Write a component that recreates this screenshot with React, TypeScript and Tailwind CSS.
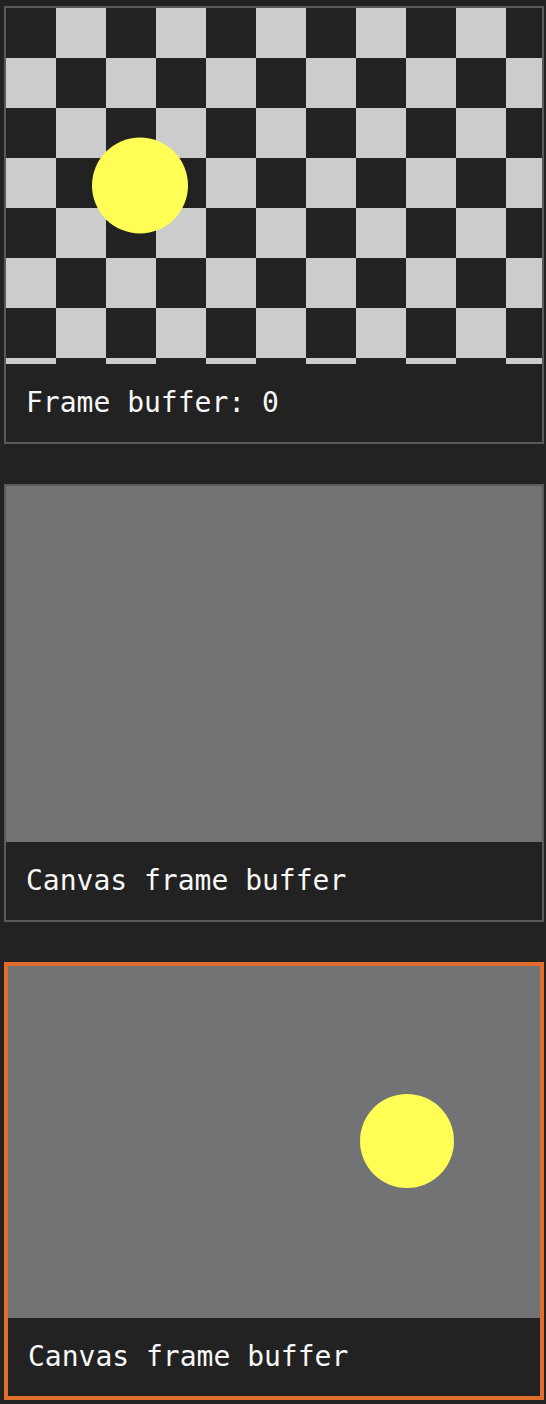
import React from "react";

function Checker({ w, h }: { w: number; h: number }) {
  const cells: React.ReactNode[] = [];
  const cols = Math.ceil(w / 50);
  const rows = Math.ceil(h / 50);
  for (let r = 0; r < rows; r++) {
    for (let c = 0; c < cols; c++) {
      if ((r + c) % 2 === 1) {
        cells.push(<rect key={`${r}-${c}`} x={c * 50} y={r * 50} width={50} height={50} fill="#cccccc" />);
      }
    }
  }
  return (
    <svg width={w} height={h} className="block">
      <rect x={0} y={0} width={w} height={h} fill="#222222" />
      {cells}
      <circle cx={134} cy={177.5} r={48} fill="#ffff55" />
    </svg>
  );
}

function Caption({ text }: { text: string }) {
  return (
    <div
      className="h-[78px] flex items-center pl-[20px] bg-[#222222] text-[28px] leading-none text-[#f7f7f7]"
      style={{ fontFamily: '"DejaVu Sans Mono", "Liberation Mono", monospace' }}
    >
      {text}
    </div>
  );
}

export default function App() {
  return (
    <div className="min-h-screen bg-[#222222] pl-[4px] pt-[6px] pb-[4px]">
      <div className="flex flex-col gap-[40px] w-[540px]">
        <div className="border-2 border-[#5a5a5a] h-[438px] flex flex-col">
          <Checker w={536} h={356} />
          <Caption text="Frame buffer: 0" />
        </div>
        <div className="border-2 border-[#5a5a5a] h-[438px] flex flex-col">
          <div className="h-[356px] bg-[#727374]" />
          <Caption text="Canvas frame buffer" />
        </div>
        <div className="border-4 border-[#e36d2c] h-[438px] flex flex-col">
          <svg width={532} height={352} className="block">
            <rect x={0} y={0} width={532} height={352} fill="#727374" />
            <circle cx={399} cy={175} r={47} fill="#ffff55" />
          </svg>
          <Caption text="Canvas frame buffer" />
        </div>
      </div>
    </div>
  );
}
